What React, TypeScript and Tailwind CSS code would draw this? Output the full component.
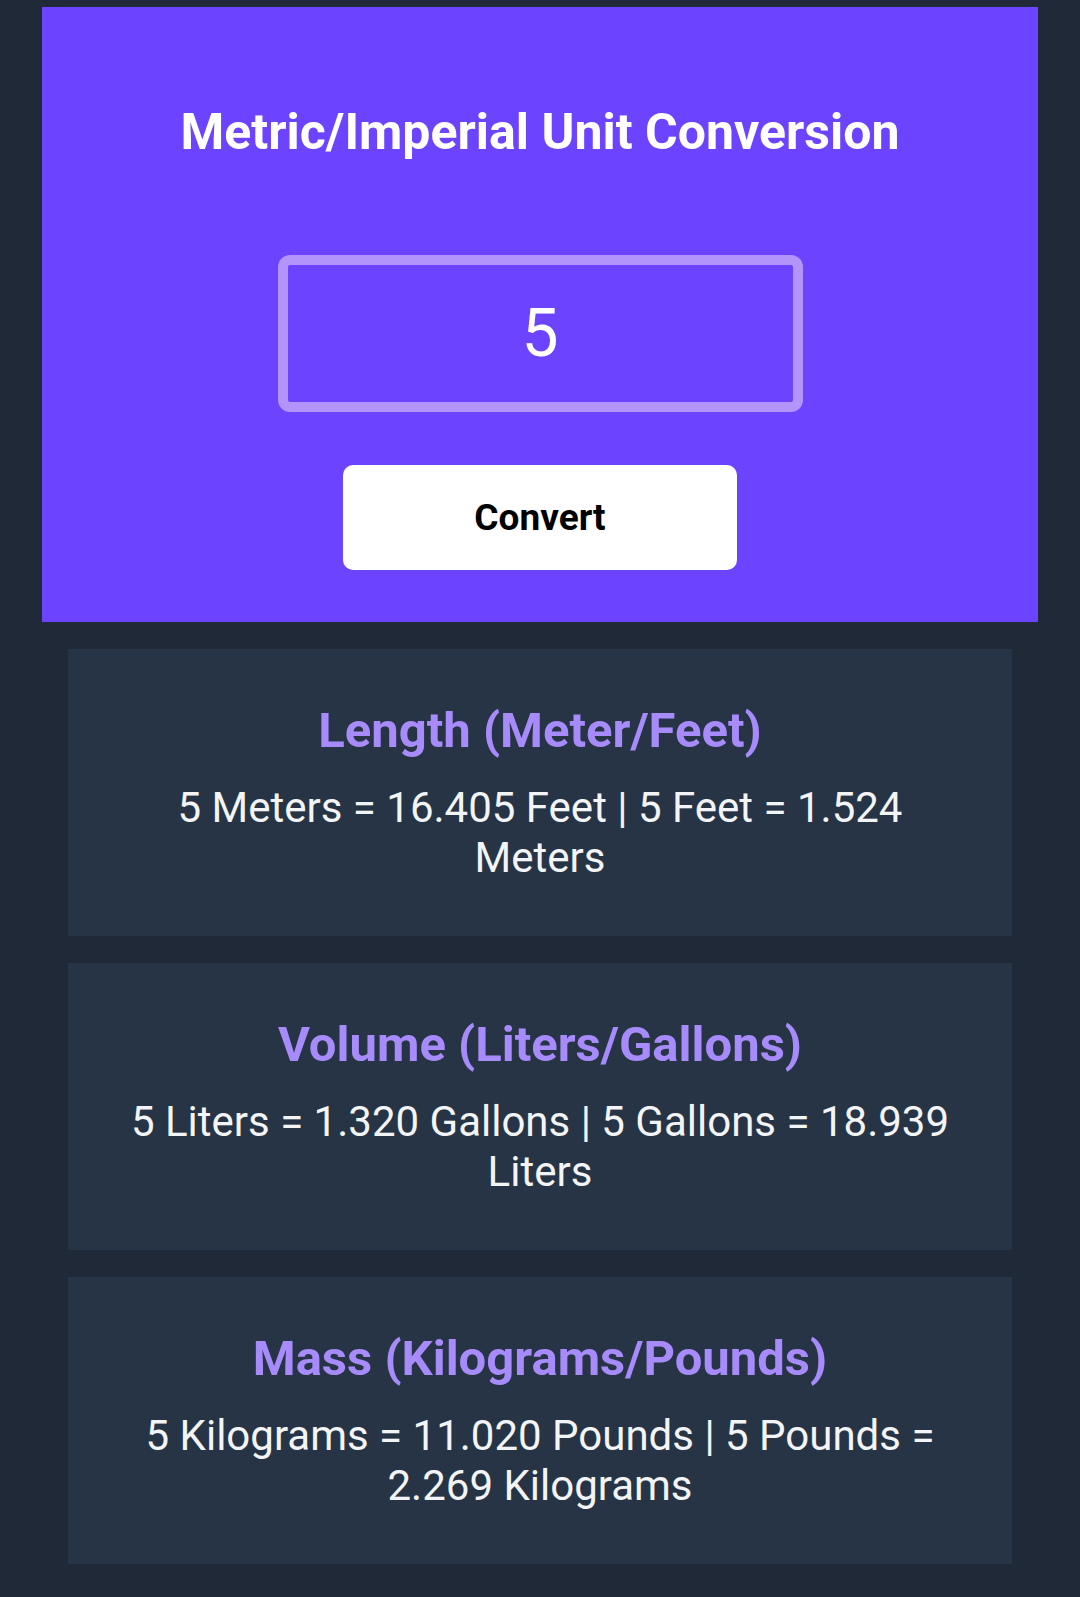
import { useState } from "react";

const results = [
  {
    title: "Length (Meter/Feet)",
    text: "5 Meters = 16.405 Feet | 5 Feet = 1.524 Meters",
  },
  {
    title: "Volume (Liters/Gallons)",
    text: "5 Liters = 1.320 Gallons | 5 Gallons = 18.939 Liters",
  },
  {
    title: "Mass (Kilograms/Pounds)",
    text: "5 Kilograms = 11.020 Pounds | 5 Pounds = 2.269 Kilograms",
  },
];

function ResultCard({ title, text }: { title: string; text: string }) {
  return (
    <div className="flex h-[287px] flex-col items-center justify-center bg-[#263445] px-[58px] text-center">
      <h2 className="text-[49px] font-bold leading-[56px] text-[#a78bfa]">
        {title}
      </h2>
      <p className="mt-[24px] text-[42px] leading-[50px] text-[#f3f4f6]">
        {text}
      </p>
    </div>
  );
}

export default function App() {
  const [value, setValue] = useState("5");

  return (
    <div className="min-h-[1597px] bg-[#1f2937] px-[42px] pt-[7px] pb-[34px] font-['Roboto',sans-serif]">
      <div className="flex flex-col items-center bg-[#6c44ff] pt-[97px] pb-[52px]">
        <h1 className="text-[50px] font-bold leading-[56px] text-white">
          Metric/Imperial Unit Conversion
        </h1>
        <input
          value={value}
          onChange={(e) => setValue(e.target.value)}
          className="mt-[95px] h-[157px] w-[525px] rounded-[12px] border-[10px] border-[#b294fb] bg-transparent text-center text-[66px] text-white outline-none"
        />
        <button className="mt-[53px] h-[105px] w-[394px] rounded-[10px] bg-white text-[37px] font-bold text-black">
          Convert
        </button>
      </div>
      <div className="mt-[27px] flex flex-col gap-[27px] px-[26px]">
        {results.map((r) => (
          <ResultCard key={r.title} title={r.title} text={r.text} />
        ))}
      </div>
    </div>
  );
}
